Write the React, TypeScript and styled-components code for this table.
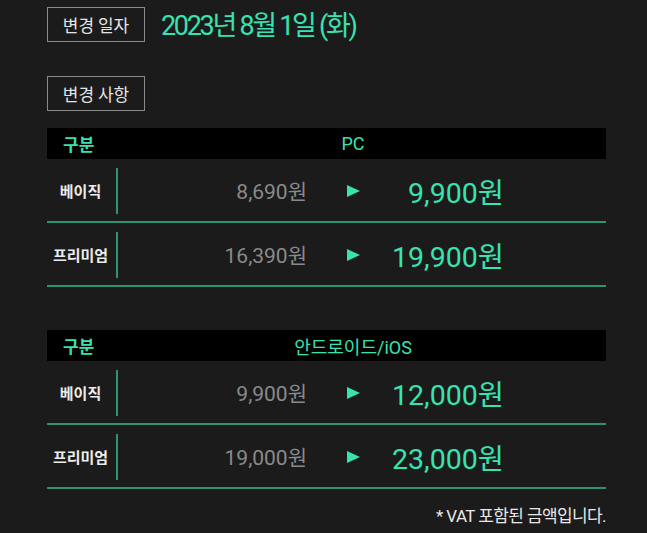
import React from "react";
import styled, { createGlobalStyle } from "styled-components";

const GREEN = "#37e3b0";
const LINE = "#2e9276";

const Global = createGlobalStyle`
  html, body { margin: 0; padding: 0; background: #1b1b1b; }
  body { font-family: Roboto, "Noto Sans CJK KR", sans-serif; }
`;

const Page = styled.div`
  width: 647px;
  height: 533px;
  box-sizing: border-box;
  padding: 7px 0 0 47px;
  background: #1b1b1b;
  overflow: hidden;
`;

const InfoRow = styled.div<{ $mb: number }>`
  display: flex;
  align-items: center;
  gap: 16px;
  height: 35px;
  margin-bottom: ${(p) => p.$mb}px;
`;

const TagBox = styled.div`
  width: 98px;
  height: 35px;
  box-sizing: border-box;
  border: 1px solid #8a8a8a;
  display: flex;
  align-items: center;
  justify-content: center;
  color: #e4e4e4;
  font-size: 17px;
  font-family: "Noto Sans CJK KR", sans-serif;
`;

const DateText = styled.div`
  color: ${GREEN};
  font-size: 27px;
  font-weight: 400;
  letter-spacing: -2.3px;
  margin-top: -2px;
  font-family: Roboto, "Noto Sans CJK KR", sans-serif;
`;

const Table = styled.div<{ $mb: number }>`
  width: 559px;
  margin-bottom: ${(p) => p.$mb}px;
`;

const Header = styled.div`
  height: 31px;
  background: #000;
  display: flex;
  align-items: center;
  color: ${GREEN};
`;

const HeadLabel = styled.div`
  width: 53px;
  box-sizing: border-box;
  padding-left: 16px;
  font-size: 17px;
  font-weight: 700;
  font-family: "Noto Sans CJK KR", sans-serif;
`;

const HeadTitle = styled.div`
  flex: 1;
  text-align: center;
  font-size: 18px;
  font-family: Roboto, "Noto Sans CJK KR", sans-serif;
`;

const Row = styled.div`
  height: 62px;
  border-bottom: 2px solid ${LINE};
  display: grid;
  grid-template-columns: 67px 2px 2px 189px 40px 12px 145px 1fr;
  align-items: center;
`;

const Label = styled.div`
  grid-column: 1;
  text-align: center;
  color: #ececec;
  font-size: 15px;
  font-weight: 700;
  font-family: "Noto Sans CJK KR", sans-serif;
`;

const Divider = styled.div`
  grid-column: 3;
  width: 2px;
  height: 46px;
  margin-top: 1px;
  background: ${LINE};
`;

const OldPrice = styled.div`
  grid-column: 4;
  text-align: right;
  color: #8a8a8a;
  font-size: 21px;
  font-family: Roboto, "Noto Sans CJK KR", sans-serif;
`;

const Arrow = styled.div`
  grid-column: 6;
  width: 0;
  height: 0;
  border-top: 6.5px solid transparent;
  border-bottom: 6.5px solid transparent;
  border-left: 13px solid ${GREEN};
  margin-top: 1px;
`;

const NewPrice = styled.div`
  grid-column: 7;
  text-align: right;
  color: ${GREEN};
  font-size: 28.5px;
  font-family: Roboto, "Noto Sans CJK KR", sans-serif;
`;

const Note = styled.div`
  width: 559px;
  text-align: right;
  color: #e8e8e8;
  font-size: 17px;
  letter-spacing: -0.6px;
  font-family: Roboto, "Noto Sans CJK KR", sans-serif;
`;

type Item = { label: string; old: string; next: string };

const PriceTable = ({ title, items, mb }: { title: string; items: Item[]; mb: number }) => (
  <Table $mb={mb}>
    <Header>
      <HeadLabel>구분</HeadLabel>
      <HeadTitle>{title}</HeadTitle>
    </Header>
    {items.map((it) => (
      <Row key={it.label}>
        <Label>{it.label}</Label>
        <Divider />
        <OldPrice>{it.old}</OldPrice>
        <Arrow />
        <NewPrice>{it.next}</NewPrice>
      </Row>
    ))}
  </Table>
);

export default function App() {
  return (
    <>
      <Global />
      <Page>
        <InfoRow $mb={34}>
          <TagBox>변경 일자</TagBox>
          <DateText>2023년 8월 1일 (화)</DateText>
        </InfoRow>
        <InfoRow $mb={17}>
          <TagBox>변경 사항</TagBox>
        </InfoRow>
        <PriceTable
          title="PC"
          mb={43}
          items={[
            { label: "베이직", old: "8,690원", next: "9,900원" },
            { label: "프리미엄", old: "16,390원", next: "19,900원" },
          ]}
        />
        <PriceTable
          title="안드로이드/iOS"
          mb={13}
          items={[
            { label: "베이직", old: "9,900원", next: "12,000원" },
            { label: "프리미엄", old: "19,000원", next: "23,000원" },
          ]}
        />
        <Note>* VAT 포함된 금액입니다.</Note>
      </Page>
    </>
  );
}
